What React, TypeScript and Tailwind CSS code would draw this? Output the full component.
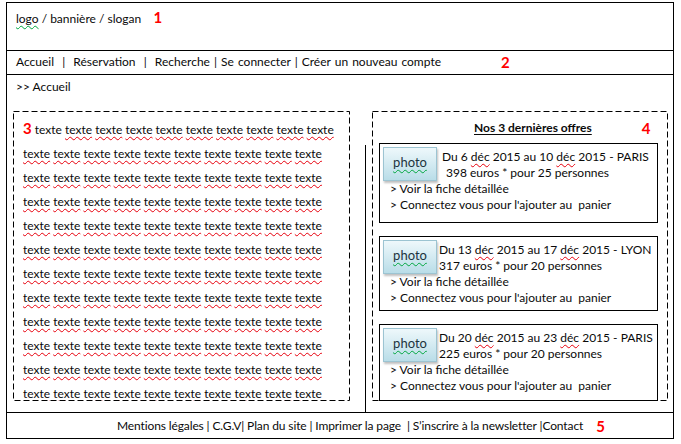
import React from 'react';

const font = { fontFamily: 'Lato, "Liberation Sans", sans-serif' };

const Spell: React.FC<{ children: React.ReactNode; green?: boolean }> = ({ children, green }) => (
  <span
    className={`underline decoration-wavy decoration-1 underline-offset-2 ${
      green ? 'decoration-green-600' : 'decoration-red-600'
    }`}
  >
    {children}
  </span>
);

const Marker: React.FC<{ n: string; className?: string }> = ({ n, className = '' }) => (
  <span className={`font-bold text-[15px] tracking-normal text-[#ff0000] ${className}`}>{n}</span>
);

const DashedFrame: React.FC = () => (
  <svg className="absolute inset-0 w-full h-full pointer-events-none" preserveAspectRatio="none">
    <rect x="0.5" y="0.5" width="calc(100% - 1px)" height="calc(100% - 1px)" fill="none" stroke="#000" strokeWidth="1" strokeDasharray="6 3" />
  </svg>
);

const TexteLine: React.FC<{ first?: boolean }> = ({ first }) => (
  <div className={`h-[24px] leading-[24px] whitespace-nowrap ${first ? 'mb-[2px]' : ''}`}>
    {first && (
      <>
        <Marker n="3" />{' '}
        texte{' '}
      </>
    )}
    {Array.from({ length: first ? 9 : 10 }).map((_, i) => (
      <React.Fragment key={i}>
        <Spell>texte</Spell>{' '}
      </React.Fragment>
    ))}
  </div>
);

const PhotoButton: React.FC = () => (
  <div className="w-[54px] h-[34px] shrink-0 flex items-center justify-center border border-[#9cc4d2] bg-gradient-to-b from-[#eef8fb] to-[#b9dde8] shadow-[1px_2px_2px_rgba(0,0,0,0.25)] text-[13px] text-[#1d3440]">
    <span className="-mt-[2px]">
      <Spell green>photo</Spell>
    </span>
  </div>
);

type Offer = { dates: [string, string, string]; price: string; h: string; indent?: boolean };

const offers: Offer[] = [
  { dates: ['Du 6 ', '2015 au 10 ', '2015 - PARIS'], price: '398 euros * pour 25 personnes', h: 'h-[80px]', indent: true },
  { dates: ['Du 13 ', '2015 au 17 ', '2015 - LYON'], price: '317 euros * pour 20 personnes', h: 'h-[75px]' },
  { dates: ['Du 20 ', '2015 au 23 ', '2015 - PARIS'], price: '225 euros * pour 20 personnes', h: 'h-[77px]' },
];

const OfferCard: React.FC<{ offer: Offer }> = ({ offer }) => (
  <div className={`relative w-[279px] ${offer.h} border border-black bg-white pl-[3px] pt-[3px]`}>
    <div className="flex">
      <PhotoButton />
      <div className={`pt-[2px] leading-[16px] ${offer.indent ? 'pl-[5px]' : 'pl-[2px]'}`}>
        <div className="whitespace-nowrap">
          {offer.dates[0]}
          <Spell>déc</Spell> {offer.dates[1]}
          <Spell>déc</Spell> {offer.dates[2]}
        </div>
        <div className={`whitespace-nowrap ${offer.indent ? 'pl-[4px]' : ''}`}>{offer.price}</div>
      </div>
    </div>
    <div className="pl-[7px] leading-[16px] whitespace-nowrap">
      <div>&gt; Voir la fiche détaillée</div>
      <div>&gt; Connectez vous pour l'ajouter au&nbsp; panier</div>
    </div>
  </div>
);

export default function App() {
  return (
    <div className="w-[681px] h-[444px] bg-white text-[#0a0a0a] text-[12px] pt-[2px] pl-[6px]" style={font}>
      <div className="w-[668px] h-[437px] border border-black flex flex-col">
        {/* 1 - header */}
        <div className="h-[48px] shrink-0 border-b border-black pl-[9px] pt-[6px] leading-[16px] whitespace-pre">
          <Spell green>logo</Spell> / bannière / slogan    <Marker n="1" />
        </div>

        {/* 2 - nav */}
        <div className="h-[24px] shrink-0 border-b border-black pl-[9px] pt-[3px] leading-[16px] flex whitespace-pre">
          <span className="[word-spacing:1px]">Accueil  |  Réservation  |  Recherche | Se connecter | Créer un nouveau compte</span>
          <Marker n="2" className="ml-[60px]" />
        </div>

        {/* main */}
        <div className="h-[337px] shrink-0 flex flex-col">
          <div className="pl-[9px] pt-[4px] leading-[16px] h-[36px]">&gt;&gt; Accueil</div>
          <div className="flex items-start h-[301px] pl-[6px]">
            {/* 3 - content */}
            <div className="relative w-[337px] h-[290px] pl-[10px] pt-[5px] overflow-hidden">
              <TexteLine first />
              {Array.from({ length: 11 }).map((_, i) => (
                <TexteLine key={i} />
              ))}
              <DashedFrame />
            </div>

            <div className="w-px h-[267px] bg-black ml-[15px] mt-[34px] self-start" />

            {/* 4 - offers */}
            <div className="relative w-[296px] h-[290px] ml-[6px] pt-[9px]">
              <DashedFrame />
              <div className="flex items-center leading-[16px] whitespace-nowrap">
                <span className="ml-[102px] font-bold underline underline-offset-2">Nos 3 dernières offres</span>
                <Marker n="4" className="ml-[50px]" />
              </div>
              <div className="ml-[7px] mt-[7px] flex flex-col gap-[13px]">
                {offers.map((o, i) => (
                  <OfferCard key={i} offer={o} />
                ))}
              </div>
            </div>
          </div>
        </div>

        {/* 5 - footer */}
        <div className="h-[26px] shrink-0 border-t border-black flex items-center pl-[110px] leading-[16px] whitespace-pre">
          <span className="tracking-[-0.12px]">Mentions légales | C.G.V| Plan du site | Imprimer la page  | S’inscrire à la newsletter |Contact</span>
          <Marker n="5" className="ml-[13px]" />
        </div>
      </div>
    </div>
  );
}
